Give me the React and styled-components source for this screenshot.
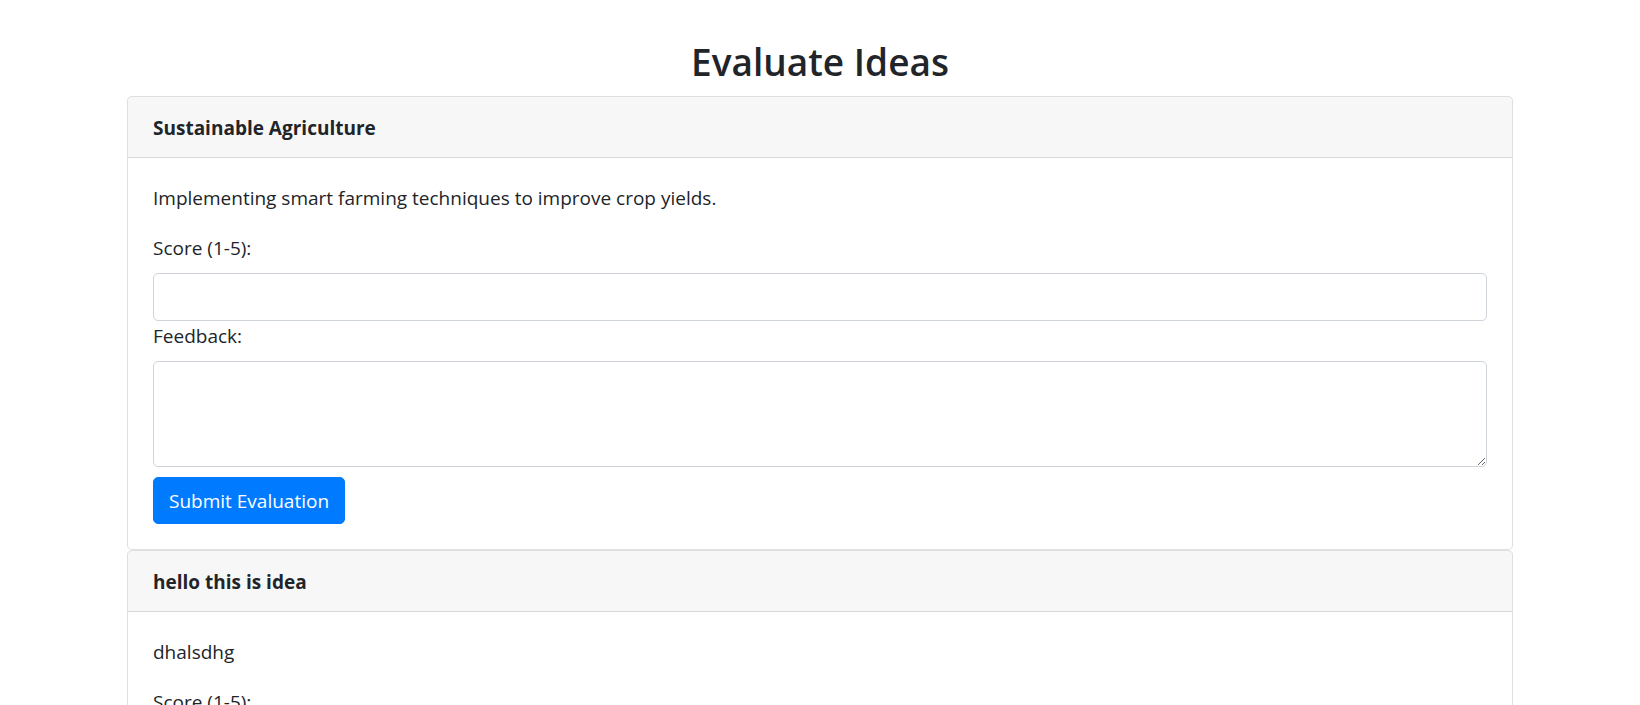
import React from "react";
import styled, { createGlobalStyle } from "styled-components";

const GlobalStyle = createGlobalStyle`
  *, *::before, *::after { box-sizing: border-box; }
  body {
    margin: 0;
    background: #fff;
    color: #212529;
    font-family: "Open Sans", "Noto Sans", sans-serif;
    font-size: 19px;
    line-height: 30px;
  }
`;

const Page = styled.main`
  padding-top: 38px;
`;

const Container = styled.div`
  width: 1386px;
  margin: 0 auto;
`;

const Title = styled.h2`
  margin: 0 0 10px;
  text-align: center;
  font-size: 37px;
  font-weight: 600;
  line-height: 48px;
  color: #212529;
`;

const Card = styled.section`
  display: flex;
  flex-direction: column;
  background: #fff;
  border: 1px solid rgba(0, 0, 0, 0.125);
  border-radius: 5px;
  overflow: hidden;
`;

const CardHeader = styled.header`
  padding: 16px 25px 14px;
  background: rgba(0, 0, 0, 0.03);
  border-bottom: 1px solid rgba(0, 0, 0, 0.125);
  font-weight: 700;
  line-height: 30px;
`;

const CardBody = styled.div`
  padding: 25px;
`;

const Description = styled.p`
  margin: 0 0 20px;
`;

const Label = styled.label`
  display: inline-block;
  margin-bottom: 10px;
`;

const fieldBase = `
  display: block;
  width: 100%;
  padding: 7.5px 15px;
  font-family: "Open Sans", "Noto Sans", sans-serif;
  font-size: 19px;
  line-height: 30px;
  color: #495057;
  background: #fff;
  border: 1px solid #ced4da;
  border-radius: 5px;
  outline: none;
`;

const Input = styled.input`
  ${fieldBase}
  height: 47.5px;
`;

const TextArea = styled.textarea`
  ${fieldBase}
  height: 106px;
  resize: vertical;
`;

const SubmitButton = styled.button`
  display: inline-block;
  margin-top: 10.5px;
  padding: 8px 15px 7px;
  font-family: "Open Sans", "Noto Sans", sans-serif;
  font-size: 19px;
  line-height: 30px;
  color: #fff;
  background: #007bff;
  border: 1px solid #007bff;
  border-radius: 5px;
  cursor: pointer;
`;

const ideas = [
  {
    title: "Sustainable Agriculture",
    description: "Implementing smart farming techniques to improve crop yields.",
  },
  { title: "hello this is idea", description: "dhalsdhg" },
];

function IdeaCard({ idea }) {
  return (
    <Card>
      <CardHeader>{idea.title}</CardHeader>
      <CardBody>
        <Description>{idea.description}</Description>
        <form onSubmit={(e) => e.preventDefault()}>
          <Label>Score (1-5):</Label>
          <Input type="number" min="1" max="5" />
          <Label>Feedback:</Label>
          <TextArea rows={3} />
          <SubmitButton type="submit">Submit Evaluation</SubmitButton>
        </form>
      </CardBody>
    </Card>
  );
}

export default function App() {
  return (
    <Page>
      <GlobalStyle />
      <Container>
        <Title>Evaluate Ideas</Title>
        {ideas.map((idea) => (
          <IdeaCard key={idea.title} idea={idea} />
        ))}
      </Container>
    </Page>
  );
}
